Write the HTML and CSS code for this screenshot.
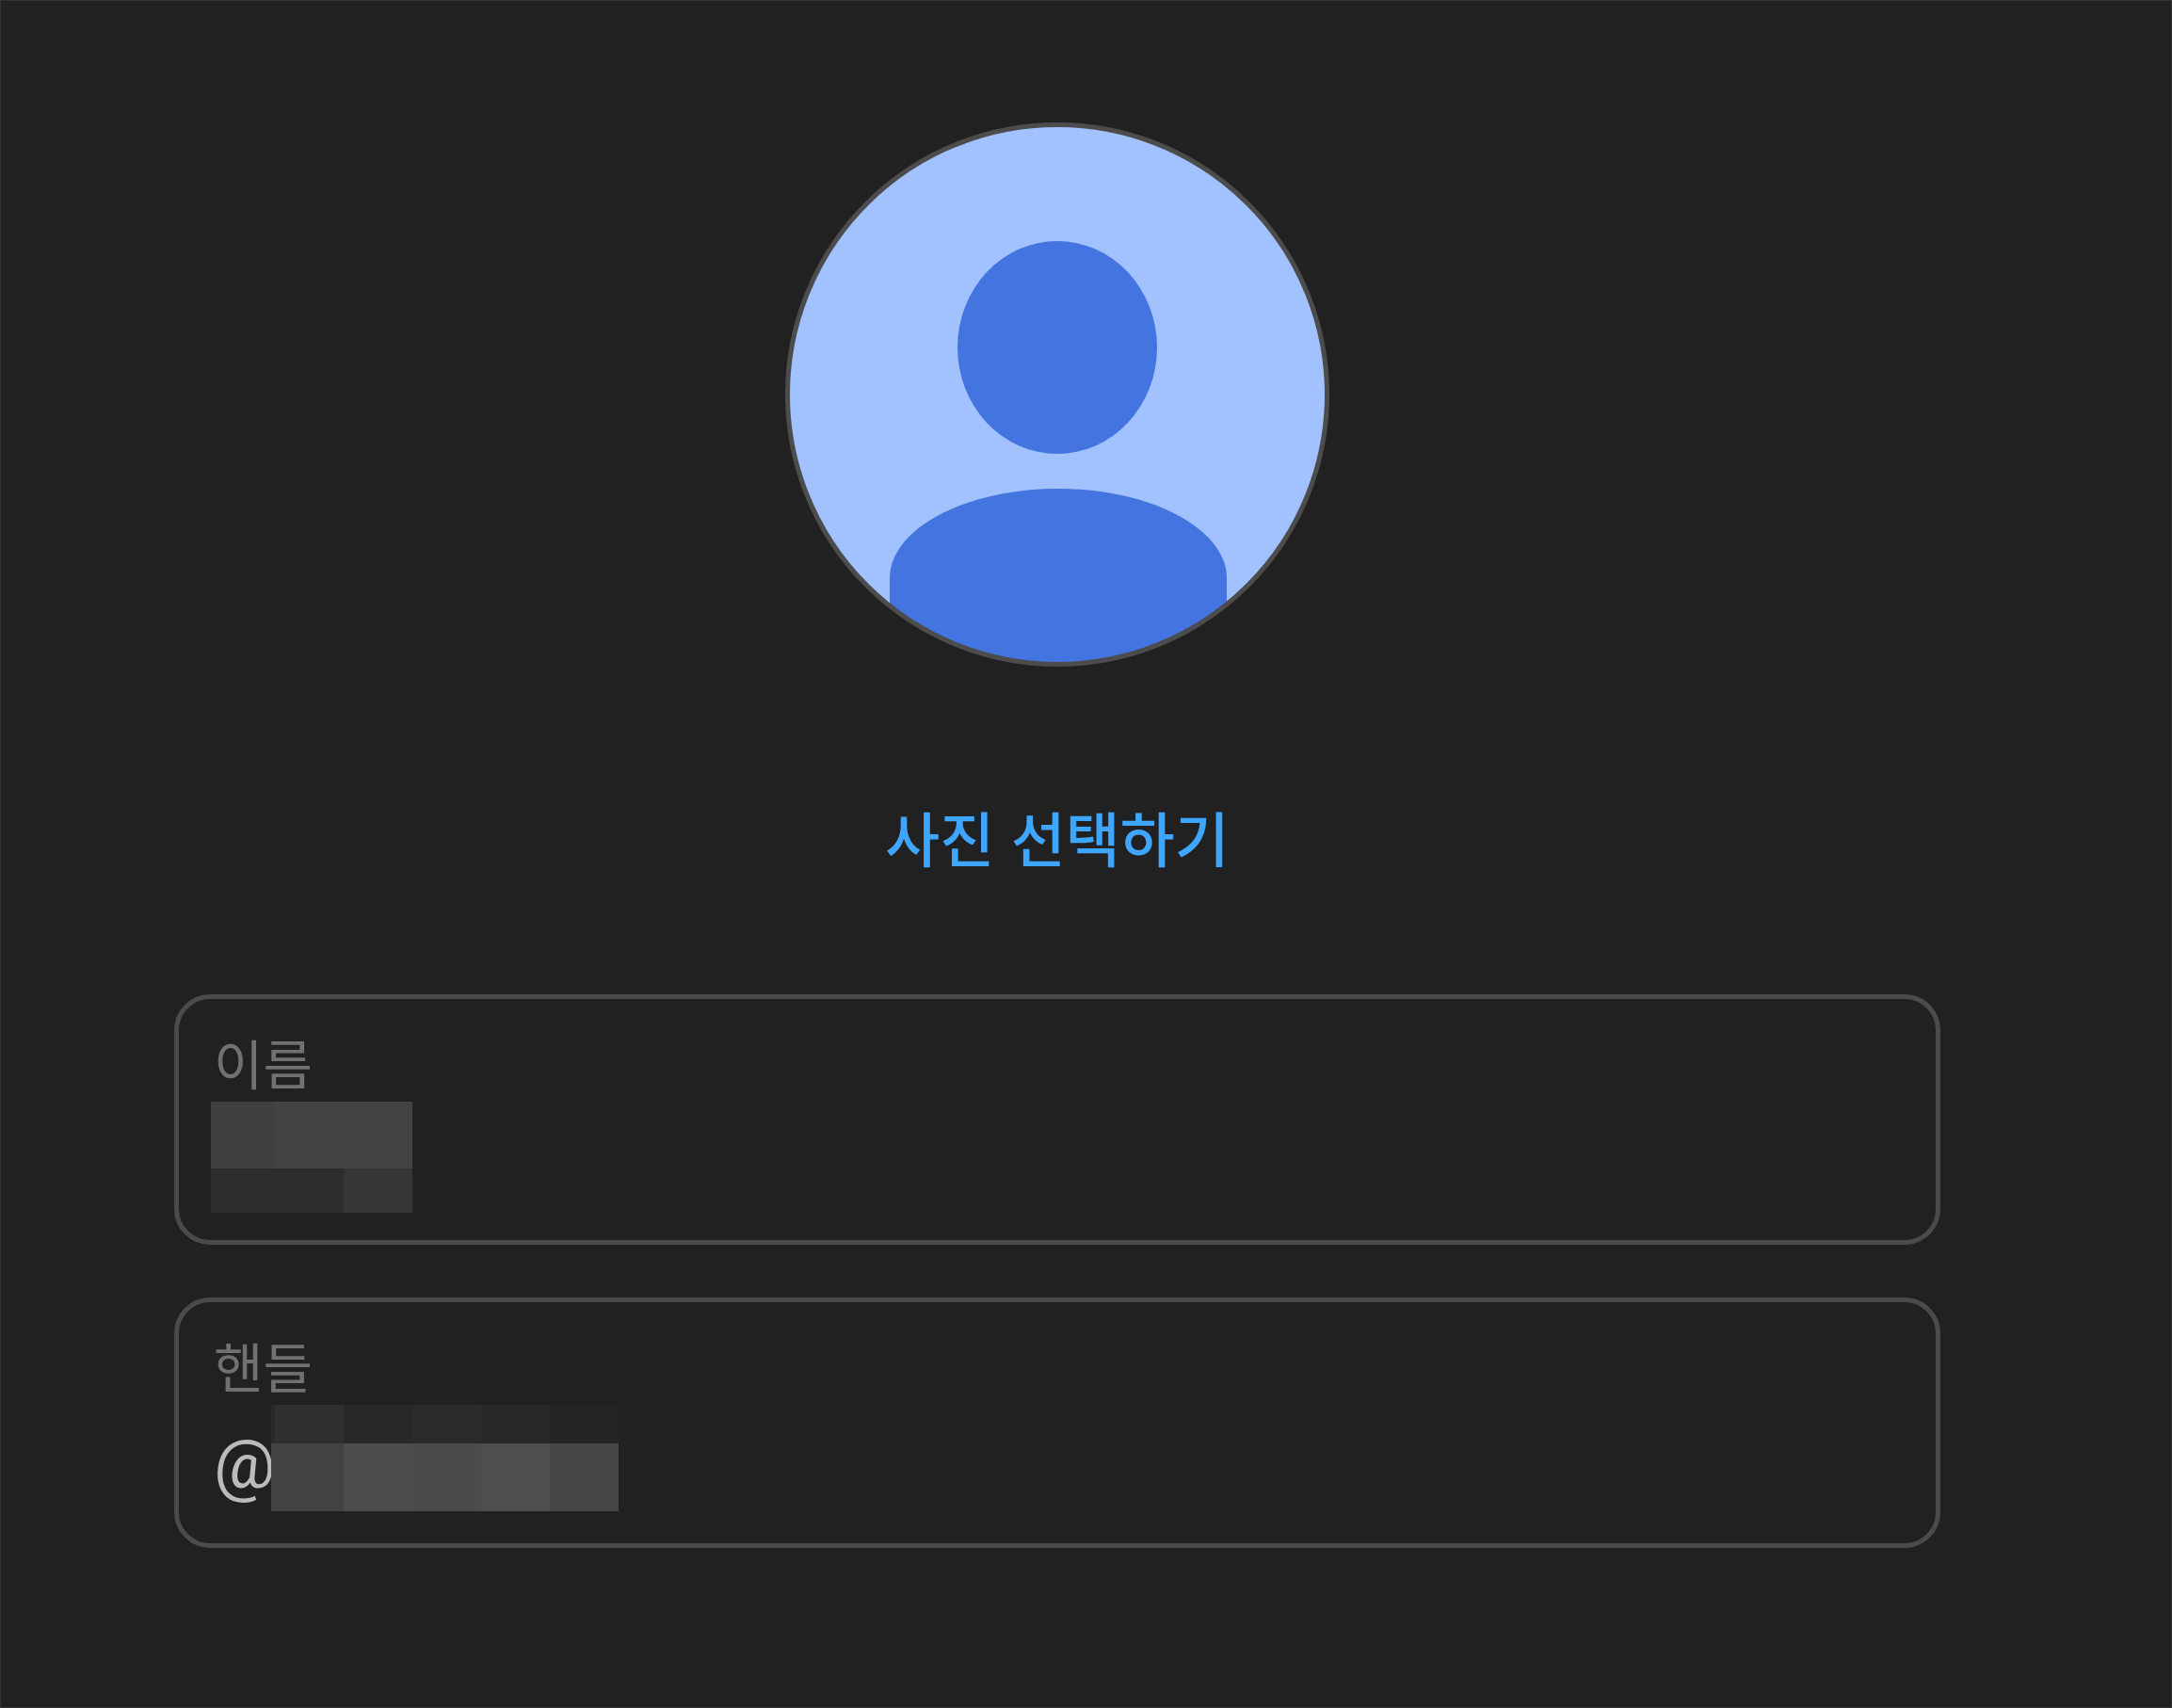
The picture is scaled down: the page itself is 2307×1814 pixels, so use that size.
FILE: index.html
```html
<!DOCTYPE html>
<html lang="ko">
<head>
<meta charset="utf-8">
<meta name="viewport" content="width=device-width, initial-scale=1">
<title>프로필</title>
<link rel="stylesheet" href="styles.css">
</head>
<body>
<main class="profile">
  <svg class="avatar" viewBox="0 0 578 578" aria-hidden="true">
    <defs><clipPath id="disc"><circle cx="289" cy="289" r="286"/></clipPath></defs>
    <g clip-path="url(#disc)">
      <rect width="578" height="578" fill="#a1c2ff"/>
      <ellipse cx="289" cy="239" rx="106" ry="113" fill="#4374e0"/>
      <path d="M111 578V484C111 433 189 389 290 389S469 433 469 484V578Z" fill="#4374e0"/>
    </g>
    <circle cx="289" cy="289" r="286.500" fill="none" stroke="#4c4c4c" stroke-width="5"/>
  </svg>
  <button class="pick" type="button">사진 선택하기</button>
  <form class="fields">
    <div class="field">
      <label class="label" for="name">이름</label>
      <input class="input" id="name" type="text">
      <svg class="mask mask-name" viewBox="0 0 214 118" shape-rendering="crispEdges" aria-hidden="true">
        <rect width="68" height="71" fill="#404040"/>
        <rect x="68" width="146" height="71" fill="#434343"/>
        <rect y="71" width="68" height="47" fill="#2c2c2c"/>
        <rect x="68" y="71" width="73" height="47" fill="#2d2d2d"/>
        <rect x="141" y="71" width="73" height="47" fill="#363636"/>
      </svg>
    </div>
    <div class="field">
      <label class="label" for="handle">핸들</label>
      <input class="input" id="handle" type="text" value="@">
      <svg class="mask mask-handle" viewBox="0 0 369 113" shape-rendering="crispEdges" aria-hidden="true">
        <rect width="4" height="41" fill="#2a2a2a"/>
        <rect x="4" width="73" height="41" fill="#303030"/>
        <rect x="77" width="73" height="41" fill="#282828"/>
        <rect x="150" width="73" height="41" fill="#2b2b2b"/>
        <rect x="223" width="73" height="41" fill="#282828"/>
        <rect x="296" width="73" height="41" fill="#242424"/>
        <rect y="41" width="77" height="72" fill="#434343"/>
        <rect x="77" y="41" width="73" height="72" fill="#4c4c4c"/>
        <rect x="150" y="41" width="73" height="72" fill="#4b4b4b"/>
        <rect x="223" y="41" width="73" height="72" fill="#4f4f4f"/>
        <rect x="296" y="41" width="73" height="72" fill="#464646"/>
      </svg>
    </div>
  </form>
</main>
</body>
</html>
```
FILE: styles.css
```css
* {
  box-sizing: border-box;
}

body {
  margin: 0;
  background: #212121;
  font-family: Roboto, "Noto Sans CJK KR", sans-serif;
}

.profile {
  display: flex;
  flex-direction: column;
  align-items: center;
  min-height: 100vh;
  padding: 129px 245px 128px 184px;
  border: 1px solid #333;
}

.avatar {
  width: 578px;
  max-width: 100%;
}

.pick {
  margin: 132px 0 120px;
  padding: 0;
  border: 0;
  background: none;
  color: #3ea6ff;
  font: 500 63px/96px "Noto Sans CJK KR", sans-serif;
  cursor: pointer;
}

.fields {
  display: flex;
  flex-direction: column;
  gap: 56px;
  align-self: stretch;
}

.field {
  position: relative;
  display: flex;
  flex-direction: column;
  gap: 12px;
  height: 266px;
  padding: 32px 37px;
  border: 5px solid #4b4b4b;
  border-radius: 38px;
}

.label {
  color: #717171;
  font-size: 57px;
  line-height: 80px;
}

.input {
  width: 100%;
  height: 96px;
  padding: 0;
  border: 0;
  outline: 0;
  background: none;
  color: #bbb;
  font-family: inherit;
  font-size: 73px;
}

.mask {
  position: absolute;
}

.mask-name {
  top: 109px;
  left: 34px;
  width: 214px;
  height: 118px;
}

.mask-handle {
  top: 109px;
  left: 98px;
  width: 369px;
  height: 113px;
}
```
